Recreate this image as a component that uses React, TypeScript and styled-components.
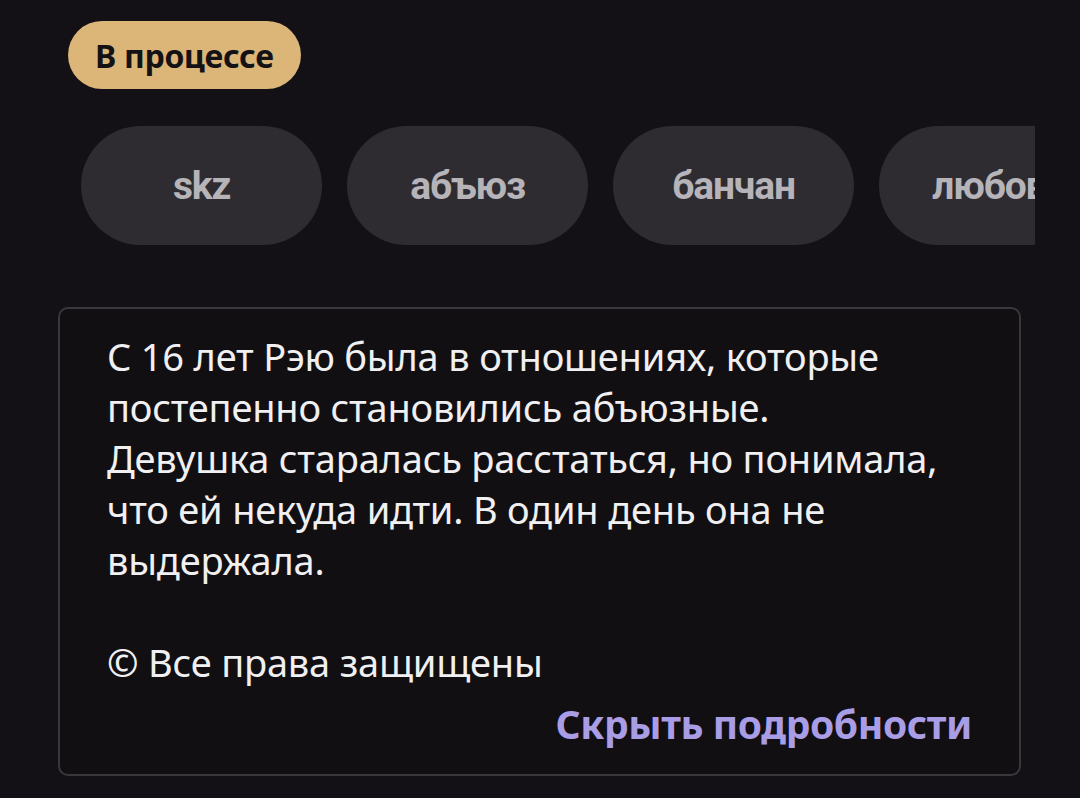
import React from "react";
import styled, { createGlobalStyle } from "styled-components";

const Global = createGlobalStyle`
  html, body { margin: 0; padding: 0; background: #131115; }
  body { font-family: "Noto Sans", sans-serif; }
`;

const Page = styled.div`
  width: 1080px;
  height: 798px;
  box-sizing: border-box;
  padding: 21px 0 0 0;
  background: #131115;
  overflow: hidden;
`;

const StatusBadge = styled.div`
  margin-left: 68px;
  display: inline-flex;
  align-items: center;
  justify-content: center;
  height: 68px;
  padding: 0 27px;
  border-radius: 34px;
  background: #dcb679;
  color: #141214;
  font-family: "Noto Sans", sans-serif;
  font-weight: 700;
  font-size: 32px;
  letter-spacing: -0.3px;
`;

const TagRow = styled.div`
  margin-top: 37px;
  margin-left: 81px;
  width: 954px;
  display: flex;
  gap: 25px;
  overflow: hidden;
`;

const Tag = styled.div`
  flex: 0 0 241px;
  height: 119px;
  border-radius: 60px;
  background: #2e2c31;
  color: #b6b4b9;
  display: flex;
  align-items: center;
  justify-content: center;
  font-family: Roboto, sans-serif;
  font-weight: 700;
  font-size: 39px;
  letter-spacing: -1.2px;
  white-space: nowrap;
  overflow: hidden;
`;

const Card = styled.div`
  margin: 62px 0 0 58px;
  width: 963px;
  height: 469px;
  box-sizing: border-box;
  border: 2px solid #39373b;
  border-radius: 10px;
  background: #110f12;
  padding: 22px 47px 0 47px;
  display: flex;
  flex-direction: column;
`;

const Description = styled.p`
  margin: 0;
  color: #f0eff1;
  font-family: "Noto Sans", sans-serif;
  font-size: 38px;
  line-height: 51px;
  letter-spacing: -0.2px;
`;

const Copyright = styled.p`
  margin: 51px 0 0 0;
  color: #f0eff1;
  font-family: "Noto Sans", sans-serif;
  font-size: 38px;
  line-height: 51px;
  letter-spacing: -0.2px;
`;

const Toggle = styled.button`
  align-self: flex-end;
  margin-top: 10px;
  background: none;
  border: none;
  padding: 0;
  color: #a99de6;
  font-family: "Noto Sans", sans-serif;
  font-weight: 700;
  font-size: 39px;
  line-height: 51px;
  letter-spacing: -0.4px;
  cursor: pointer;
`;

const tags = ["skz", "абъюз", "банчан", "любовь"];

export default function App() {
  return (
    <Page>
      <Global />
      <StatusBadge>В процессе</StatusBadge>
      <TagRow>
        {tags.map((t) => (
          <Tag key={t}>{t}</Tag>
        ))}
      </TagRow>
      <Card>
        <Description>
          С 16 лет Рэю была в отношениях, которые постепенно становились абъюзные.
          <br />
          Девушка старалась расстаться, но понимала, что ей некуда идти. В один день она не выдержала.
        </Description>
        <Copyright>© Все права защищены</Copyright>
        <Toggle>Скрыть подробности</Toggle>
      </Card>
    </Page>
  );
}
